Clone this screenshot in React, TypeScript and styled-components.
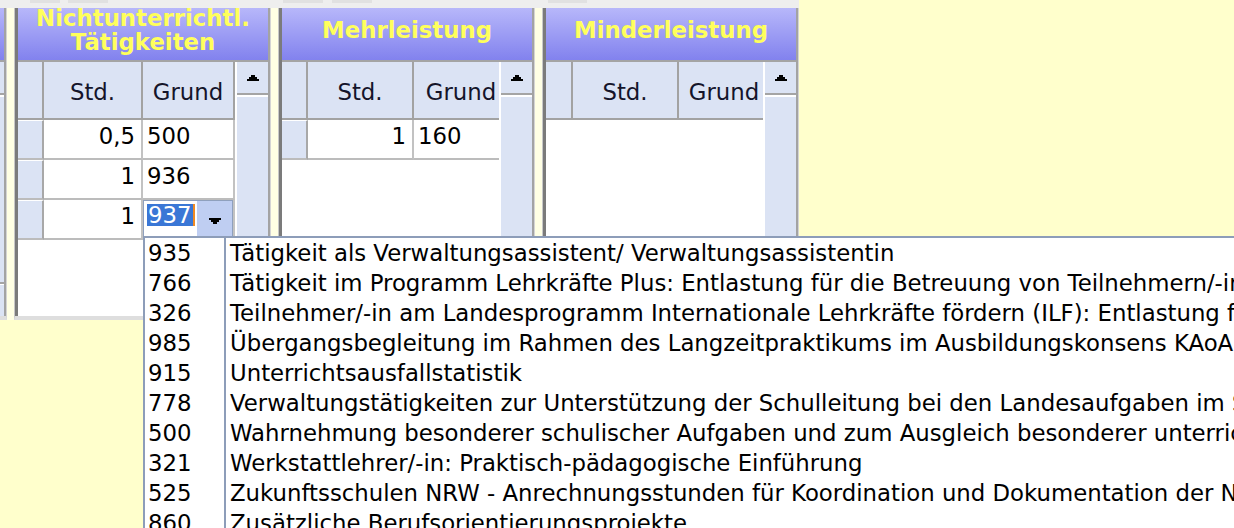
import React from "react";
import styled, { createGlobalStyle } from "styled-components";

const GlobalStyle = createGlobalStyle`
  html, body {
    margin: 0;
    padding: 0;
  }
  body {
    background: #ffffcc;
    font-family: "DejaVu Sans", Verdana, sans-serif;
    overflow: hidden;
  }
`;

const Screen = styled.div`
  position: relative;
  width: 1234px;
  height: 528px;
  overflow: hidden;
  background: #ffffcc;
`;

const Board = styled.div`
  display: inline-flex;
  flex-direction: column;
  vertical-align: top;
`;

const TopStrip = styled.div`
  display: flex;
  align-items: flex-start;
  height: 8px;
  background: #eeeeee;
`;

const StripTab = styled.span<{ $left: number; $width: number }>`
  flex: none;
  margin-left: ${(p) => p.$left}px;
  width: ${(p) => p.$width}px;
  height: 3px;
  background: #e1e1e1;
`;

const PanelRow = styled.div`
  display: flex;
  gap: 7px;
  margin-left: -250px;
  background: #ffffe4;
`;

const Panel = styled.section`
  display: flex;
  flex-direction: column;
  flex: none;
  width: 257px;
  height: 312px;
  box-sizing: border-box;
  border-left: 1px solid #c8c8c8;
  border-right: 1px solid #d4d4d4;
  border-bottom: 4px solid #dedede;
`;

const Frame = styled.div`
  flex: 1;
  display: flex;
  flex-direction: column;
  border-left: 3px solid #7b7b7b;
  border-right: 2px solid #a3a3a3;
`;

const Title = styled.h2`
  margin: 0;
  height: 54px;
  box-sizing: border-box;
  padding: 0 4px 9px;
  display: flex;
  align-items: center;
  justify-content: center;
  text-align: center;
  background: linear-gradient(#b7b7fa, #8282ee);
  border-bottom: 2px solid #a4a4a4;
  color: #ffff5c;
  font: bold 22.8px/24px "DejaVu Sans", Verdana, sans-serif;
`;

const Body = styled.div`
  display: flex;
  height: 254px;
  background: #ffffff;
`;

const Sheet = styled.div<{ $cols: string }>`
  flex: 1;
  min-width: 0;
  display: grid;
  grid-template-columns: ${(p) => p.$cols};
  grid-template-rows: 58px;
  grid-auto-rows: 40px;
  align-content: start;
  font-size: 22.8px;
  color: #000;
`;

const HeadCell = styled.div`
  box-sizing: border-box;
  display: flex;
  align-items: center;
  justify-content: center;
  padding-top: 3px;
  background: #dbe3f4;
  border-right: 2px solid #a2a2a2;
  border-bottom: 2px solid #a2a2a2;
  color: #14142a;
  white-space: nowrap;
  overflow: hidden;
`;

const RowHead = styled.div`
  box-sizing: border-box;
  background: #dbe3f4;
  border-top: 1px solid #ffffff;
  border-right: 2px solid #a8a8a8;
  border-bottom: 2px solid #bcbcbc;
`;

const DataCell = styled.div<{ $align: "left" | "right"; $editing?: boolean }>`
  box-sizing: border-box;
  display: flex;
  align-items: center;
  justify-content: ${(p) => (p.$align === "right" ? "flex-end" : "flex-start")};
  padding: ${(p) => (p.$editing ? "0" : p.$align === "right" ? "0 6px 7px 0" : "0 0 7px 4px")};
  background: #ffffff;
  border-right: 2px solid #c2c2c2;
  border-bottom: 2px solid #bcbcbc;
  white-space: nowrap;
`;

const Editor = styled.div`
  position: relative;
  flex: 1;
  align-self: stretch;
  display: flex;
  align-items: stretch;
  box-sizing: border-box;
  border: 1px solid #8fa0bd;
  border-bottom: none;
  background: #ffffff;
`;

const Selection = styled.span`
  align-self: flex-start;
  margin: 3px 0 0 3px;
  height: 22px;
  padding: 0 1px;
  line-height: 22px;
  background: #3a77d6;
  color: #ffffff;
  border-right: 2px solid #f08a24;
`;

const DropButton = styled.span`
  margin-left: auto;
  width: 35px;
  display: flex;
  align-items: center;
  justify-content: center;
  padding-top: 2px;
  background: #bfcef2;
`;

const Pip = styled.svg<{ $down?: boolean }>`
  display: block;
  transform: ${(p) => (p.$down ? "scaleY(-1)" : "none")};
`;

const Arrow = ({ down }: { down?: boolean }) => (
  <Pip $down={down} width="12" height="6" viewBox="0 0 12 6" shapeRendering="crispEdges">
    <rect x="4" y="0" width="4" height="2" fill="#000" />
    <rect x="2" y="2" width="8" height="2" fill="#000" />
    <rect x="0" y="4" width="12" height="2" fill="#000" />
  </Pip>
);

const ScrollBar = styled.div`
  position: relative;
  z-index: 1;
  flex: none;
  width: 33px;
  display: flex;
  flex-direction: column;
  box-sizing: border-box;
  border-left: 2px solid #ffffff;
  background: #dbe3f4;
`;

const ScrollButton = styled.div<{ $down?: boolean }>`
  height: ${(p) => (p.$down ? "32px" : "33px")};
  box-sizing: border-box;
  display: flex;
  align-items: center;
  justify-content: center;
  border-bottom: ${(p) => (p.$down ? "none" : "2px solid #a4a4a4")};
  border-top: ${(p) => (p.$down ? "1px solid #ffffff" : "none")};
`;

const Track = styled.div`
  flex: 1;
  border-top: 2px solid #ffffff;
  border-bottom: 2px solid #a4a4a4;
`;

const ListBox = styled.ul`
  position: absolute;
  z-index: 20;
  top: 35px;
  left: -1px;
  width: 1120px;
  margin: 0;
  padding: 0;
  list-style: none;
  background: #ffffff;
  border-top: 2px solid #8d9db9;
  border-left: 2px solid #8d9db9;
  font-size: 22.8px;
  color: #000;
`;

const Option = styled.li`
  display: grid;
  grid-template-columns: 81px 1fr;
  height: 30px;
`;

const OptionCode = styled.span`
  box-sizing: border-box;
  padding: 1px 0 0 3px;
  line-height: 29px;
  border-right: 2px solid #8d9db9;
`;

const OptionText = styled.span`
  padding: 1px 0 0 4px;
  line-height: 29px;
  white-space: nowrap;
  overflow: hidden;
`;

type Row = { std: string; grund: string; editing?: boolean };

type PanelData = {
  title: string;
  heads: string[];
  cols: string;
  rows: Row[];
};

const reasons: [string, string][] = [
  ["935", "Tätigkeit als Verwaltungsassistent/ Verwaltungsassistentin"],
  ["766", "Tätigkeit im Programm Lehrkräfte Plus: Entlastung für die Betreuung von Teilnehmern/-innen"],
  ["326", "Teilnehmer/-in am Landesprogramm Internationale Lehrkräfte fördern (ILF): Entlastung für"],
  ["985", "Übergangsbegleitung im Rahmen des Langzeitpraktikums im Ausbildungskonsens KAoA"],
  ["915", "Unterrichtsausfallstatistik"],
  ["778", "Verwaltungstätigkeiten zur Unterstützung der Schulleitung bei den Landesaufgaben im Schulbereich"],
  ["500", "Wahrnehmung besonderer schulischer Aufgaben und zum Ausgleich besonderer unterrichtlicher Belastungen"],
  ["321", "Werkstattlehrer/-in: Praktisch-pädagogische Einführung"],
  ["525", "Zukunftsschulen NRW - Anrechnungsstunden für Koordination und Dokumentation der Netzwerkarbeit"],
  ["860", "Zusätzliche Berufsorientierungsprojekte"],
  ["870", "Zusätzliche Förderangebote"],
];

const panels: PanelData[] = [
  { title: "", heads: ["", ""], cols: "26px 99px 92px", rows: [] },
  {
    title: "Nichtunterrichtl. Tätigkeiten",
    heads: ["Std.", "Grund"],
    cols: "26px 99px 92px",
    rows: [
      { std: "0,5", grund: "500" },
      { std: "1", grund: "936" },
      { std: "1", grund: "937", editing: true },
    ],
  },
  {
    title: "Mehrleistung",
    heads: ["Std.", "Grund"],
    cols: "26px 106px 96px",
    rows: [{ std: "1", grund: "160" }],
  },
  { title: "Minderleistung", heads: ["Std.", "Grund"], cols: "27px 106px 92px", rows: [] },
];

const ReasonPicker = ({ value }: { value: string }) => (
  <Editor>
    <Selection>{value}</Selection>
    <DropButton>
      <Arrow down />
    </DropButton>
    <ListBox>
      {reasons.map(([code, text]) => (
        <Option key={code}>
          <OptionCode>{code}</OptionCode>
          <OptionText>{text}</OptionText>
        </Option>
      ))}
    </ListBox>
  </Editor>
);

const HoursPanel = ({ data }: { data: PanelData }) => (
  <Panel>
    <Frame>
      <Title>{data.title}</Title>
      <Body>
        <Sheet $cols={data.cols}>
          <HeadCell />
          {data.heads.map((h, i) => (
            <HeadCell key={i}>{h}</HeadCell>
          ))}
          {data.rows.map((row, i) => (
            <React.Fragment key={i}>
              <RowHead />
              <DataCell $align="right">{row.std}</DataCell>
              <DataCell $align="left" $editing={row.editing}>
                {row.editing ? <ReasonPicker value={row.grund} /> : row.grund}
              </DataCell>
            </React.Fragment>
          ))}
        </Sheet>
        <ScrollBar>
          <ScrollButton>
            <Arrow />
          </ScrollButton>
          <Track />
          <ScrollButton $down>
            <Arrow down />
          </ScrollButton>
        </ScrollBar>
      </Body>
    </Frame>
  </Panel>
);

export default function App() {
  return (
    <>
      <GlobalStyle />
      <Screen>
        <Board>
          <TopStrip>
            <StripTab $left={30} $width={30} />
            <StripTab $left={8} $width={40} />
            <StripTab $left={175} $width={40} />
            <StripTab $left={9} $width={40} />
            <StripTab $left={176} $width={39} />
          </TopStrip>
          <PanelRow>
            {panels.map((p, i) => (
              <HoursPanel key={i} data={p} />
            ))}
          </PanelRow>
        </Board>
      </Screen>
    </>
  );
}
